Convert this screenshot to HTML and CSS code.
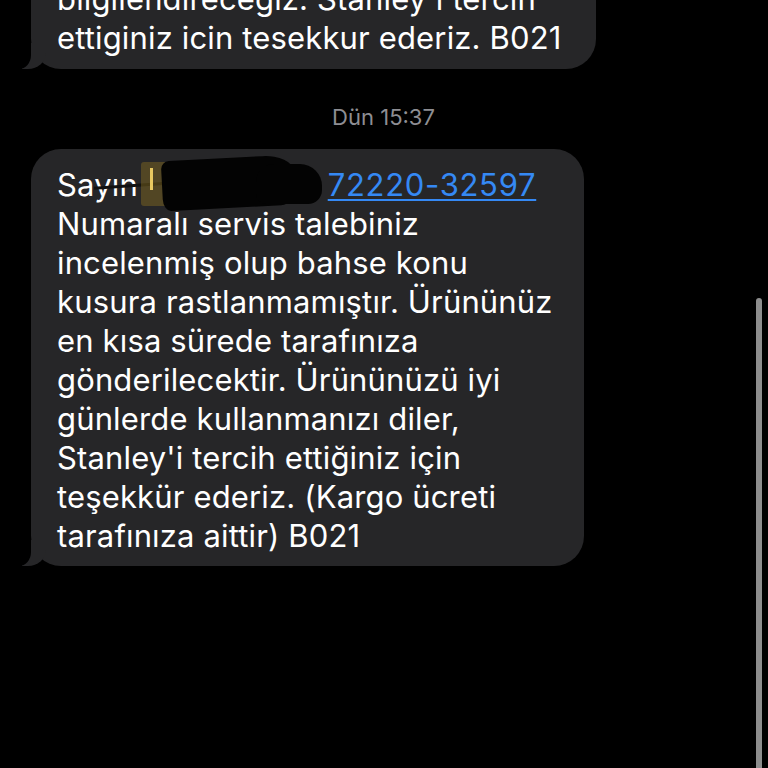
FILE: index.html
```html
<!DOCTYPE html>
<html lang="tr">
<head>
<meta charset="utf-8">
<title>Mesajlar</title>
<link rel="stylesheet" href="styles.css">
</head>
<body>
<main class="thread">
  <div class="bubble bubble-first">
    <p class="msg">bilgilendirecegiz. Stanley'i tercih<br>ettiginiz icin tesekkur ederiz. B021</p>
  </div>
  <div class="stamp">Dün 15:37</div>
  <div class="bubble bubble-second">
    <p class="msg">Say<span class="strike">ın</span><span class="redact"><span class="hl"></span><span class="bang"></span><span class="blob"></span><span class="blob blob2"></span></span> <a class="link" href="#">72220-32597</a><br>Numaralı servis talebiniz<br>incelenmiş olup bahse konu<br>kusura rastlanmamıştır. Ürününüz<br>en kısa sürede tarafınıza<br>gönderilecektir. Ürününüzü iyi<br>günlerde kullanmanızı diler,<br>Stanley'i tercih ettiğiniz için<br>teşekkür ederiz. (Kargo ücreti<br>tarafınıza aittir) B021</p>
  </div>
</main>
<div class="scrollbar"></div>
</body>
</html>
```

FILE: styles.css
```css
html, body {
  margin: 0;
  padding: 0;
  background: #000;
  height: 100%;
  overflow: hidden;
}
body {
  font-family: Inter, "Liberation Sans", Arial, sans-serif;
  color: #fff;
  position: relative;
}
.thread {
  display: flex;
  flex-direction: column;
  align-items: flex-start;
  padding-left: 31px;
}
.bubble {
  position: relative;
  background: #262628;
  border-radius: 30px;
  padding: 16px 20px 12px 26px;
  box-sizing: border-box;
}
.bubble::before {
  content: "";
  position: absolute;
  bottom: 0;
  left: -9px;
  width: 24px;
  height: 26px;
  background: #262628;
  border-bottom-right-radius: 18px 16px;
}
.bubble::after {
  content: "";
  position: absolute;
  bottom: 0;
  left: -30px;
  width: 30px;
  height: 26px;
  background: #000;
  border-bottom-right-radius: 12px 14px;
}
.bubble-first {
  width: 565px;
  margin-top: -37px;
}
.bubble-second {
  width: 553px;
  padding-bottom: 11px;
}
.msg {
  margin: 0;
  font-size: 31px;
  line-height: 39px;
  letter-spacing: 0.15px;
  white-space: nowrap;
  position: relative;
  z-index: 1;
}
.stamp {
  text-align: center;
  color: #8e8e93;
  font-size: 22px;
  line-height: 26px;
  margin: 35px 0 19px;
  width: 705px;
}
.strike {
  position: relative;
}
.redact {
  display: inline-block;
  position: relative;
  width: 181px;
  height: 30px;
  vertical-align: -4px;
}
.redact .hl {
  position: absolute;
  left: 3px;
  top: -8px;
  width: 32px;
  height: 44px;
  background: rgba(150, 120, 30, 0.4);
  border-radius: 3px;
}
.redact .bang {
  position: absolute;
  left: 12px;
  top: -2px;
  width: 3px;
  height: 22px;
  background: #e8c860;
}
.redact::before {
  content: "";
  position: absolute;
  left: -44px;
  top: 14px;
  width: 80px;
  height: 3px;
  background: #111;
  transform: rotate(-4deg);
}
.redact .blob {
  position: absolute;
  left: 24px;
  top: -12px;
  width: 132px;
  height: 50px;
  background: #030303;
  border-radius: 8px 30px 14px 8px / 8px 16px 16px 12px;
  transform: rotate(-3deg);
}
.redact .blob2 {
  left: 118px;
  top: -6px;
  width: 66px;
  height: 40px;
  border-radius: 18px 22px 14px 10px;
  transform: none;
}
.link {
  color: #3589f4;
  letter-spacing: 0.7px;
  text-decoration: underline;
  text-decoration-thickness: 2px;
  text-underline-offset: 3px;
}
.scrollbar {
  position: absolute;
  left: 756px;
  top: 298px;
  width: 6px;
  height: 480px;
  background: #8d8d8d;
  border-radius: 3px;
}
```
